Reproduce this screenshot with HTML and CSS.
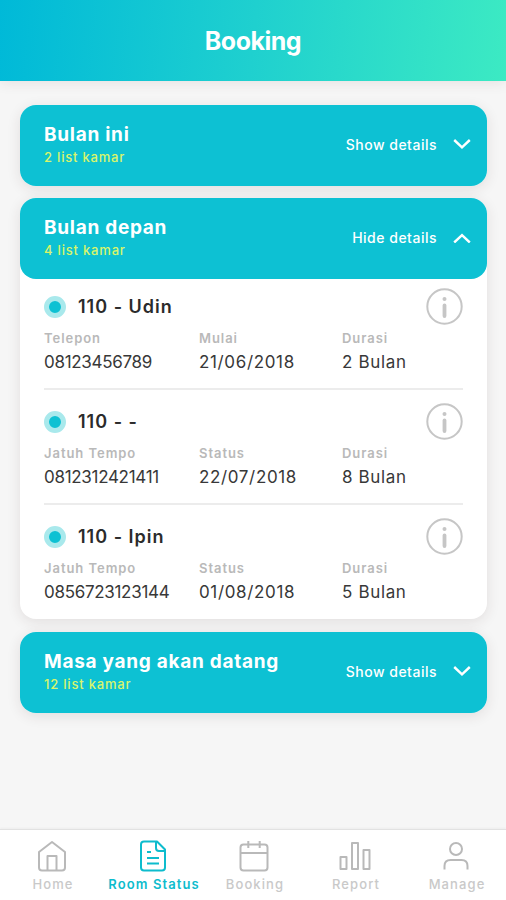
FILE: index.html
```
<!DOCTYPE html>
<html lang="id">
<head>
    <meta charset="UTF-8">
    <meta name="viewport" content="width=device-width, initial-scale=1.0">
    <title>Booking</title>
    <link rel="stylesheet" href="styles.css">
</head>
<body>

    <svg class="sprite">
        <symbol id="icon-down" viewBox="0 0 18 11"><path d="M1.2 1 L9 8.3 L16.8 1"/></symbol>
        <symbol id="icon-up" viewBox="0 0 18 11"><path d="M1.2 10.5 L9 3.2 L16.8 10.5"/></symbol>
        <symbol id="icon-info" viewBox="0 0 37 37">
            <circle cx="18.5" cy="18.5" r="17.2"/>
            <path d="M18.500 17.500 V28" stroke-width="3.800" stroke-linecap="round"/>
            <circle class="info-dot" cx="18.5" cy="11" r="2"/>
        </symbol>
    </svg>

    <header class="header">
        <h1 class="header-title">Booking</h1>
    </header>

    <main class="content">
        <section class="card">
            <div class="card-head">
                <div>
                    <h2 class="card-title">Bulan ini</h2>
                    <p class="card-count">2 list kamar</p>
                </div>
                <button class="toggle">Show details <svg class="chevron"><use href="#icon-down"/></svg></button>
            </div>
        </section>

        <section class="card">
            <div class="card-head">
                <div>
                    <h2 class="card-title">Bulan depan</h2>
                    <p class="card-count">4 list kamar</p>
                </div>
                <button class="toggle">Hide details <svg class="chevron"><use href="#icon-up"/></svg></button>
            </div>
            <div class="card-body">
                <article class="room">
                    <div class="room-head">
                        <span class="dot"></span>
                        <h3 class="room-name">110 - Udin</h3>
                        <svg class="info"><use href="#icon-info"/></svg>
                    </div>
                    <dl class="room-data">
                        <div><dt>Telepon</dt><dd class="phone">08123456789</dd></div>
                        <div><dt>Mulai</dt><dd>21/06/2018</dd></div>
                        <div><dt>Durasi</dt><dd>2 Bulan</dd></div>
                    </dl>
                </article>
                <article class="room">
                    <div class="room-head">
                        <span class="dot"></span>
                        <h3 class="room-name">110 - -</h3>
                        <svg class="info"><use href="#icon-info"/></svg>
                    </div>
                    <dl class="room-data">
                        <div><dt>Jatuh Tempo</dt><dd class="phone">0812312421411</dd></div>
                        <div><dt>Status</dt><dd>22/07/2018</dd></div>
                        <div><dt>Durasi</dt><dd>8 Bulan</dd></div>
                    </dl>
                </article>
                <article class="room">
                    <div class="room-head">
                        <span class="dot"></span>
                        <h3 class="room-name">110 - Ipin</h3>
                        <svg class="info"><use href="#icon-info"/></svg>
                    </div>
                    <dl class="room-data">
                        <div><dt>Jatuh Tempo</dt><dd class="phone">0856723123144</dd></div>
                        <div><dt>Status</dt><dd>01/08/2018</dd></div>
                        <div><dt>Durasi</dt><dd>5 Bulan</dd></div>
                    </dl>
                </article>
            </div>
        </section>

        <section class="card">
            <div class="card-head">
                <div>
                    <h2 class="card-title">Masa yang akan datang</h2>
                    <p class="card-count">12 list kamar</p>
                </div>
                <button class="toggle">Show details <svg class="chevron"><use href="#icon-down"/></svg></button>
            </div>
        </section>
    </main>

    <nav class="navbar">
        <a class="nav-item">
            <svg class="nav-icon" viewBox="0 0 32 32"><path d="M3 12 L16 2 L29 12 V27.5 Q29 30.5 26 30.5 H6 Q3 30.5 3 27.5 Z M11.5 30 V16 H20.5 V30"/></svg>
            <span>Home</span>
        </a>
        <a class="nav-item active">
            <svg class="nav-icon" viewBox="0 0 32 32"><path d="M20 1.500 H7 Q4 1.500 4 4.500 V27.500 Q4 30.500 7 30.500 H25 Q28 30.500 28 27.500 V9.500 Z M19 2 V8 Q19 11 22 11 H28 M10 12 H14 M10 18 H22 M10 23.500 H22"/></svg>
            <span>Room Status</span>
        </a>
        <a class="nav-item">
            <svg class="nav-icon" viewBox="0 0 32 32"><path d="M5.500 4.500 H26.500 Q29.500 4.500 29.500 7.500 V27.500 Q29.500 30.500 26.500 30.500 H5.500 Q2.500 30.500 2.500 27.500 V7.500 Q2.500 4.500 5.500 4.500 Z M2.500 13 H29.500 M10.300 1 V8 M21.700 1 V8"/></svg>
            <span>Booking</span>
        </a>
        <a class="nav-item">
            <svg class="nav-icon" viewBox="0 0 32 32"><path d="M1.500 17 H7.500 V29 H1.500 Z M13 3 H19 V29 H13 Z M24.500 10 H30.500 V29 H24.500 Z"/></svg>
            <span>Report</span>
        </a>
        <a class="nav-item">
            <svg class="nav-icon" viewBox="0 0 32 32"><circle cx="16" cy="9" r="6"/><path d="M4.500 29.500 V26 Q4.500 20 10.500 20 H21.500 Q27.500 20 27.500 26 V29.500"/></svg>
            <span>Manage</span>
        </a>
    </nav>

</body>
</html>
```

FILE: styles.css
```
* {
    box-sizing: border-box;
    margin: 0;
    padding: 0;
}
body {
    font-family: Inter, sans-serif;
    background-color: #f6f6f6;
    height: 100vh;
    display: flex;
    flex-direction: column;
    overflow: hidden;
}
.sprite {
    display: none;
}
.header {
    height: 81px;
    flex-shrink: 0;
    display: flex;
    align-items: center;
    justify-content: center;
    background: linear-gradient(96deg, #00b9d8, #1fd0cf 50%, #3ceac3);
    box-shadow: 0 2px 12px rgba(90, 50, 50, 0.1);
}
.header-title {
    color: white;
    font-size: 25px;
    font-weight: 700;
    letter-spacing: -0.5px;
}
.content {
    flex: 1;
    display: flex;
    flex-direction: column;
    gap: 12px;
    padding: 24px 19px 0 20px;
}
.card {
    background-color: white;
    border-radius: 16px;
    box-shadow: 0 3px 14px rgba(60, 40, 40, 0.11);
}
.card-head {
    height: 81px;
    display: flex;
    justify-content: space-between;
    padding: 18px 16px 0 24px;
    background-color: #0dc1d3;
    border-radius: 16px;
    color: white;
}
.card-title {
    font-size: 19px;
    line-height: 23px;
    font-weight: 700;
    letter-spacing: 0.72px;
}
.card-count {
    font-size: 13px;
    line-height: 22px;
    font-weight: 500;
    letter-spacing: 0.8px;
    color: #d9f56b;
}
.toggle {
    display: flex;
    align-items: center;
    gap: 16px;
    height: 43px;
    border: none;
    background: none;
    color: white;
    font-family: inherit;
    font-size: 14px;
    font-weight: 500;
    letter-spacing: 0.5px;
    cursor: pointer;
}
.chevron {
    width: 18px;
    height: 11px;
    fill: none;
    stroke: white;
    stroke-width: 2.4;
}
.card-body {
    padding: 0 24px;
}
.room {
    height: 115px;
    padding-top: 13px;
    border-bottom: 2px solid #ececec;
}
.room:first-child {
    height: 111px;
    padding-top: 9px;
}
.room:last-child {
    height: 114px;
    border-bottom: none;
}
.card + .card:last-child {
    margin-top: 1px;
}
.room-head {
    display: flex;
    align-items: center;
    height: 36px;
}
.dot {
    width: 22px;
    height: 22px;
    margin: 2px 12px 0 0;
    border: 5px solid #a9e9ec;
    border-radius: 50%;
    background-color: #0dc1d3;
}
.room-name {
    flex: 1;
    font-size: 18px;
    font-weight: 600;
    letter-spacing: 1px;
    color: #2b2b2b;
}
.info {
    width: 37px;
    height: 37px;
    fill: none;
    stroke: #c6c6c6;
    stroke-width: 2;
}
.info-dot {
    fill: #c6c6c6;
    stroke: none;
}
.room-data {
    display: grid;
    grid-template-columns: 155px 143px 1fr;
}
.room-data dt {
    font-size: 13px;
    line-height: 21px;
    margin-top: 4px;
    font-weight: 600;
    letter-spacing: 0.95px;
    color: #b9b9b9;
}
.room-data dd {
    font-size: 17px;
    line-height: 26px;
    letter-spacing: 0.65px;
    color: #383838;
}
.room-data .phone {
    letter-spacing: -0.3px;
}
.navbar {
    height: 71px;
    flex-shrink: 0;
    display: grid;
    grid-template-columns: repeat(5, 1fr);
    padding-left: 1px;
    background-color: white;
    border-top: 1px solid #e2e2e2;
    box-shadow: 0 -1px 2px rgba(0, 0, 0, 0.04);
}
.nav-item {
    display: flex;
    flex-direction: column;
    align-items: center;
    padding-top: 10px;
    font-size: 13px;
    line-height: 24px;
    font-weight: 500;
    letter-spacing: 1.1px;
    color: #c9c9c9;
    white-space: nowrap;
}
.nav-item span {
    padding-left: 3px;
}
.nav-icon {
    width: 32px;
    height: 32px;
    fill: none;
    stroke: #b9b9b9;
    stroke-width: 2;
    stroke-linejoin: round;
}
.active {
    color: #0dbccd;
    font-weight: 600;
}
.active .nav-icon {
    stroke: #0dbccd;
}
```
